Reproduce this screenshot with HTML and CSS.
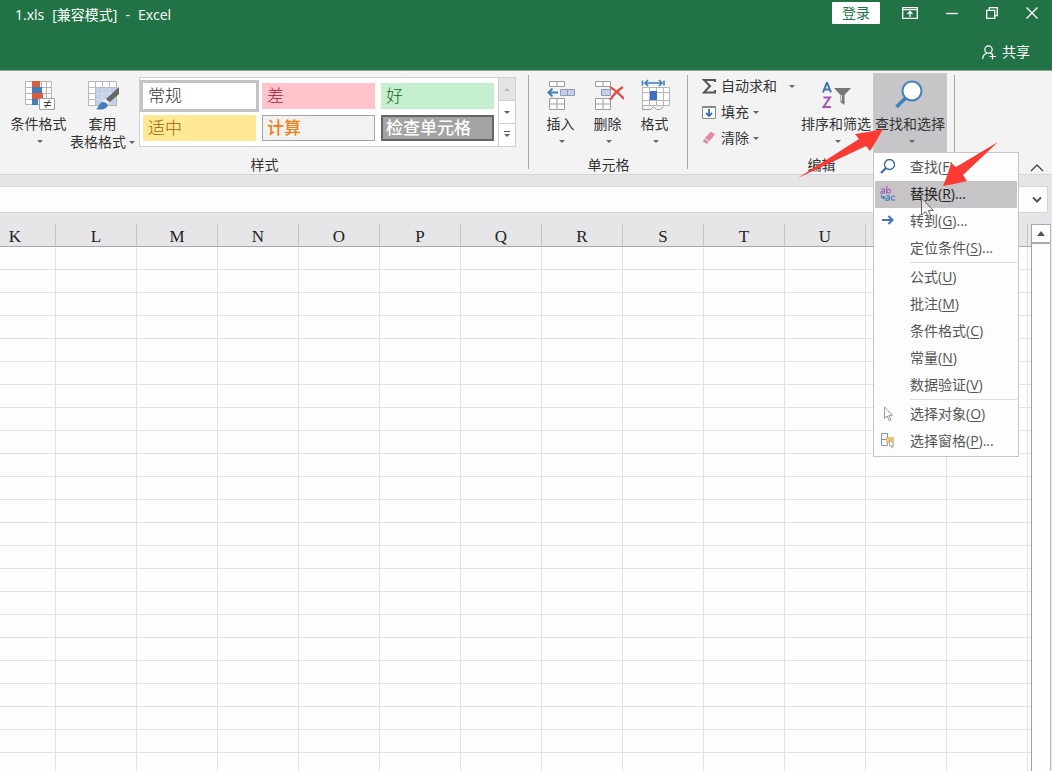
FILE: index.html
```html
<!DOCTYPE html>
<html lang="zh-CN">
<head>
<meta charset="utf-8">
<title>1.xls [兼容模式] - Excel</title>
<link rel="stylesheet" href="styles.css">
</head>
<body>
<header class="titlebar">
  <div class="title-row">
    <h1 class="doc-title"><span>1.xls</span><span>[兼容模式]</span><span>-</span><span>Excel</span></h1>
    <button class="login">登录</button>
    <div class="window-buttons">
      <button aria-label="功能区显示选项"><svg width="16" height="12" viewBox="0 0 16 12" fill="none" stroke="#fff" stroke-width="1.300"><path d="M.7.7h14.600v10.600H.7zM.7 2.700h14.600M8 10V5M5.500 7 8 4.500 10.500 7"/></svg></button>
      <button aria-label="最小化"><svg width="12" height="12" viewBox="0 0 12 12" fill="none" stroke="#fff" stroke-width="1.300"><path d="M0 6.500h12"/></svg></button>
      <button aria-label="还原"><svg width="12" height="12" viewBox="0 0 12 12" fill="none" stroke="#fff" stroke-width="1.300"><path d="M.7 3.300h8v8h-8zM3.300 3V.7h8v8H9"/></svg></button>
      <button aria-label="关闭"><svg width="12" height="12" viewBox="0 0 12 12" fill="none" stroke="#fff" stroke-width="1.400"><path d="M.5.5l11 11M11.500.5l-11 11"/></svg></button>
    </div>
  </div>
  <button class="share"><svg width="15" height="15" viewBox="0 0 15 15" fill="none" stroke="#fff" stroke-width="1.200"><circle cx="6.500" cy="4.500" r="3.700"/><path d="M.6 14c.3-3 2-5.200 4.300-5.900M8.200 8l2 1.300M10.500 8.500v6M7.500 11.500h6.500"/></svg>共享</button>
</header>

<main class="workspace">
<section class="ribbon" aria-label="开始">
  <div class="group group-styles">
    <div class="tools">
      <button class="big conditional">
        <svg width="32" height="32" viewBox="0 0 32 32"><path fill="#fff" stroke="#b5b5b5" d="M2.500 2.500h26v23h-26zM9.500 2.500v23M18.500 2.500v23M23.500 2.500v23M2.500 8.500h26M2.500 14.500h26M2.500 20.500h26"/><path fill="#dd5a3a" d="M9 2h8v6H9zM9 14h11v6H9z"/><path fill="#3f7fbe" d="M9 8h10v6H9zM9 20h6v6H9z"/><path fill="#fff" stroke="#a0a0a0" d="M16.500 19.500h15v11h-15z"/><path fill="none" stroke="#444" d="M21 23.500h7M21 26.500h7M26.500 21l-4 8"/></svg>
        <span>条件格式</span><i class="caret"></i>
      </button>
      <button class="big table-format">
        <svg width="32" height="32" viewBox="0 0 32 32"><path fill="#fff" stroke="#b5b5b5" d="M1.500 2.500h28v24h-28z"/><path fill="#c3cfe8" d="M9 8h20v18H9z"/><path fill="none" stroke="#b5bac5" d="M8.500 2.500v24M15.500 2.500v6M22.500 2.500v6M1.500 8.500h28M1.500 14.500h7M1.500 20.500h7"/><path fill="none" stroke="#d4dcee" d="M15.500 9v17M22.500 9v17M9 14.500h20M9 20.500h20"/><path fill="#666" d="M32 8v7l-9 8-4-3z"/><path fill="#f3f3f3" d="M18 20l4 4-2 2-4-4z"/><path fill="#3f7fbe" d="M9 30c3-1 2-6 7-7 3 0 6 3 4 5-3 3-7 3-11 2z"/></svg>
        <span>套用</span><span class="with-caret">表格格式<i class="caret"></i></span>
      </button>
      <div class="gallery">
        <div class="swatches">
          <button class="swatch normal">常规</button>
          <button class="swatch bad">差</button>
          <button class="swatch good">好</button>
          <button class="swatch neutral">适中</button>
          <button class="swatch calc">计算</button>
          <button class="swatch check">检查单元格</button>
        </div>
        <div class="spinner">
          <button class="off" aria-label="上一行"><i class="caret up"></i></button>
          <button aria-label="下一行"><i class="caret"></i></button>
          <button aria-label="其他"><i class="caret more"></i></button>
        </div>
      </div>
    </div>
    <h2>样式</h2>
  </div>

  <div class="group group-cells">
    <div class="tools">
      <button class="big">
        <svg width="32" height="32" viewBox="0 0 32 32"><path fill="#fff" stroke="#9b9b9b" d="M4.500 2.500h15v5h-15zM12 2.500v5M4.500 19.500h15v11h-15zM12 19.500v11M4.500 25h15"/><path fill="#c3d0e6" stroke="#8c9cb5" d="M15.500 10.500h14v6h-14zM22.500 10.500v6"/><path fill="none" stroke="#3f7fbe" stroke-width="2" d="M13 13.500H4M7.500 9.500l-4 4 4 4"/></svg>
        <span>插入</span><i class="caret"></i>
      </button>
      <button class="big">
        <svg width="32" height="32" viewBox="0 0 32 32"><path fill="#fff" stroke="#9b9b9b" d="M3.500 2.500h15v5h-15zM11 2.500v5M3.500 19.500h15v11h-15zM11 19.500v11M3.500 25h15"/><path fill="#c3d0e6" stroke="#8c9cb5" d="M9.500 10.500h9v6h-9z"/><path fill="none" stroke="#dd4b3e" stroke-width="2.200" d="M18 8c5 3 10 7 14 12M31 8c-5 3-9 7-13 13"/></svg>
        <span>删除</span><i class="caret"></i>
      </button>
      <button class="big">
        <svg width="32" height="32" viewBox="0 0 32 32"><path fill="#fff" stroke="#b5b5b5" d="M3.500 8.500h27v18h-27zM10.500 8.500v18M17.500 8.500v18M24.500 8.500v18M3.500 13.500h27M3.500 21.500h27"/><path fill="none" stroke="#a0a0a0" d="M3.500 26.500v4h8l3-3 3 3h4l3-3"/><path fill="none" stroke="#3f7fbe" stroke-width="1.600" d="M6 4h17M9 1 6 4l3 3M20 1l3 3-3 3M3.500 1.500v5M25 1.500v5"/><path fill="#3f6fc0" d="M11 12h7v9h-7z"/></svg>
        <span>格式</span><i class="caret"></i>
      </button>
    </div>
    <h2>单元格</h2>
  </div>

  <div class="group group-edit">
    <div class="tools">
      <div class="stack">
        <button class="small"><svg width="16" height="16" viewBox="0 0 16 16" fill="none" stroke="#555" stroke-width="2"><path d="M14 4V2H3L9 8l-6 6.500h11V12"/></svg><span>自动求和</span><i class="caret far"></i></button>
        <button class="small"><svg width="16" height="16" viewBox="0 0 16 16"><path fill="#fff" stroke="#8a8a8a" d="M1.500 2.500h13v12h-13z"/><path fill="#8a8a8a" d="M1 2h14v2H1z"/><path fill="none" stroke="#3472b5" stroke-width="1.800" d="M8 5v7M5 9l3 3 3-3"/></svg><span>填充</span><i class="caret"></i></button>
        <button class="small"><svg width="16" height="16" viewBox="0 0 16 16"><path fill="#e8879c" d="M10 1.500 14 4.500 8.500 11 4 8z"/><path fill="#e8879c" d="M3.300 8.800 7.700 11.800 6 14 2 11.500z"/></svg><span>清除</span><i class="caret"></i></button>
      </div>
      <button class="big sort">
        <svg width="32" height="32" viewBox="0 0 32 32"><g fill="none" stroke-width="2"><path stroke="#4472b8" d="M3 13.500 6.800 4h.4l3.800 9.500M4.500 10.500h5"/><path stroke="#a855b8" d="M3.500 18.500h6.500L3.500 28H11"/></g><path fill="#777" d="M14 9h17l-6.500 7v10l-4-3v-7z"/><path stroke="#ddd" d="M21.500 16v6"/></svg>
        <span>排序和筛选</span><i class="caret"></i>
      </button>
      <div class="dropdown">
        <button class="big find" aria-expanded="true">
          <svg width="32" height="32" viewBox="0 0 32 32"><path stroke="#3f7fbe" stroke-width="3.500" d="M11.500 19 2.500 28"/><circle cx="18" cy="12" r="9.500" fill="#fff" stroke="#3f7fbe" stroke-width="2"/></svg>
          <span>查找和选择</span><i class="caret"></i>
        </button>
        <div class="menu" role="menu">
          <button role="menuitem"><svg width="16" height="16" viewBox="0 0 16 16"><path stroke="#35679a" stroke-width="2" d="M6 9 1 14"/><circle cx="9.500" cy="5.500" r="5" fill="#fff" stroke="#35679a" stroke-width="1.300"/></svg><span>查找(<u>F</u>)...</span></button>
          <button role="menuitem" class="active"><svg class="letters" width="16" height="16" viewBox="0 0 16 16" fill="none" stroke-width="1.100"><g stroke="#a060b0"><path d="M1 3.300c2-1 3.500-.5 3.500 1V7.500M4.500 5C2 5 .8 5.600.8 6.500c0 1.300 2.700 1.200 3.700-.3"/><path d="M6.700 0v7.500"/><circle cx="8.600" cy="5.300" r="1.900"/></g><g stroke="#3f7fbe"><path d="M6 10.300c2-1 3.500-.5 3.500 1v3.200M9.500 12c-2.500 0-3.700.6-3.700 1.500 0 1.300 2.700 1.200 3.700-.3M15 10.500c-1.800-1.200-3.600-.1-3.600 1.600s1.900 2.900 3.600 1.700"/><path d="M1.500 9v2.500h3M3.200 9.800l1.600 1.700-1.600 1.700"/></g></svg><span>替换(<u>R</u>)...</span></button>
          <button role="menuitem"><svg width="16" height="16" viewBox="0 0 16 16" fill="none" stroke="#3f74b8" stroke-width="2"><path d="M2 7h10M8.500 3l4 4-4 4"/></svg><span>转到(<u>G</u>)...</span></button>
          <button role="menuitem"><i class="blank"></i><span>定位条件(<u>S</u>)...</span></button>
          <hr>
          <button role="menuitem"><i class="blank"></i><span>公式(<u>U</u>)</span></button>
          <button role="menuitem"><i class="blank"></i><span>批注(<u>M</u>)</span></button>
          <button role="menuitem"><i class="blank"></i><span>条件格式(<u>C</u>)</span></button>
          <button role="menuitem"><i class="blank"></i><span>常量(<u>N</u>)</span></button>
          <button role="menuitem"><i class="blank"></i><span>数据验证(<u>V</u>)</span></button>
          <hr>
          <button role="menuitem"><svg width="16" height="16" viewBox="0 0 16 16"><path fill="#fff" stroke="#999" d="M4.500.8v11.500l2.700-2.300 2 4.700 1.700-.8-2-4.400 3.500-.2z"/></svg><span>选择对象(<u>O</u>)</span></button>
          <button role="menuitem"><svg width="16" height="16" viewBox="0 0 16 16"><path fill="#fff" stroke="#8b93a0" d="M1.500.5h6v6h-6zM1.500 6.500h6v6h-6z"/><path fill="#efc277" d="M6 4h8v6H6z"/><path fill="#fff" stroke="#999" stroke-width=".8" d="M9.500 7v6.500l1.600-1.300 1.200 2.800 1-.5-1.200-2.600 2.200-.2z"/></svg><span>选择窗格(<u>P</u>)...</span></button>
        </div>
      </div>
    </div>
    <h2>编辑</h2>
  </div>
  <button class="collapse" aria-label="折叠功能区"><svg width="14" height="8" viewBox="0 0 14 8" fill="none" stroke="#444" stroke-width="1.300"><path d="M1 7l6-6 6 6"/></svg></button>
</section>

<div class="formula-bar">
  <input type="text" aria-label="编辑栏">
  <button aria-label="展开编辑栏"><svg width="12" height="8" viewBox="0 0 12 8" fill="none" stroke="#555" stroke-width="2"><path d="M2 1.500l4 4 4-4"/></svg></button>
</div>

<div class="sheet">
  <div class="grid">
    <table>
      <thead><tr><th>K</th><th>L</th><th>M</th><th>N</th><th>O</th><th>P</th><th>Q</th><th>R</th><th>S</th><th>T</th><th>U</th><th></th><th></th><th></th></tr></thead>
      <tbody></tbody>
    </table>
  </div>
  <div class="scrollbar">
    <button aria-label="向上滚动"><i class="caret up dark"></i></button>
    <div class="track"></div>
  </div>
</div>

<svg class="annotations" width="220" height="160" viewBox="790 70 220 160" aria-hidden="true">
  <path fill="#fb3a34" d="M798 178 859 139 855 134Q869 132 883 129 877 140 870 151L866 146Z"/>
  <path fill="#fb3a34" d="M998 142 956 167 951 163Q948 175 943 186 955 184 967 181L963 175Z"/>
  <path fill="#fff" fill-opacity=".45" stroke="#666" stroke-width="1" d="M921.500 198v17l4-3.500 3 6 2.500-1.200-2.700-5.800h5z"/>
</svg>
</main>
<script src="grid.js"></script>
</body>
</html>
```
FILE: grid.js
```js
const head = document.querySelector('.grid thead tr');
const body = document.querySelector('.grid tbody');
for (let r = 0; r < 60; r++) {
  const row = body.insertRow();
  for (let c = 0; c < head.cells.length; c++) row.insertCell();
}
```
FILE: styles.css
```css
* { box-sizing: border-box; }

body {
  margin: 0;
  height: 100vh;
  display: flex;
  flex-direction: column;
  overflow: hidden;
  background: #e6e6e8;
  color: #333;
  font: 14px/18px "Open Sans", "Noto Sans CJK SC", sans-serif;
}

button {
  margin: 0;
  padding: 0;
  border: 0;
  background: none;
  color: inherit;
  font: inherit;
}

svg { display: block; flex: none; }

/* Title bar */
.titlebar {
  flex: none;
  height: 71px;
  display: flex;
  flex-direction: column;
  align-items: flex-end;
  background: #217346;
  border-bottom: 1px solid #86a893;
  color: #fff;
}
.title-row {
  width: 100%;
  height: 30px;
  display: flex;
  align-items: flex-start;
  padding: 2px 14px 0 15px;
}
.doc-title {
  flex: 1;
  display: flex;
  gap: 8px;
  margin: 0;
  font-size: 14px;
  font-weight: 400;
  line-height: 25px;
}
.login {
  width: 48px;
  height: 22px;
  border-radius: 1px;
  background: #fff;
  color: #217346;
}
.window-buttons {
  display: flex;
  align-items: center;
  gap: 28px;
  height: 22px;
  margin-left: 22px;
}
.share {
  display: flex;
  align-items: center;
  gap: 5px;
  margin: 13px 22px 0 0;
}

/* Ribbon */
.workspace {
  flex: 1;
  min-height: 0;
  position: relative;
  display: flex;
  flex-direction: column;
}
.ribbon {
  flex: none;
  height: 104px;
  display: flex;
  padding-top: 2px;
  background: #f3f3f3;
  border-bottom: 1px solid #d4d4d4;
}
.group {
  position: relative;
  display: flex;
  flex-direction: column;
  justify-content: space-between;
  flex: none;
}
.group::after {
  content: "";
  position: absolute;
  top: 2px;
  right: 0;
  bottom: 5px;
  border-right: 1px solid #a8a8a8;
}
.group h2 {
  margin: 0;
  font-size: 14px;
  font-weight: 400;
  text-align: center;
}
.tools { display: flex; align-items: flex-start; padding-left: 8px; }
.group-styles { width: 529px; }
.group-cells { width: 159px; }
.group-edit { width: 267px; }
.group-edit .tools { padding-left: 13px; }

.big {
  display: flex;
  flex-direction: column;
  align-items: center;
  flex: none;
  width: 47px;
  height: 79px;
  padding-top: 6px;
}
.big svg { margin-bottom: 4px; }
.big > .caret { margin: 7px 0 0 3px; }
.conditional { width: 61px; }
.table-format { width: 67px; }
.with-caret {
  display: flex;
  align-items: center;
  gap: 3px;
  white-space: nowrap;
}

.caret {
  flex: none;
  border: 3px solid transparent;
  border-top-color: #666;
  border-bottom: 0;
}
.caret.up { border-top: 0; border-bottom: 3px solid #bbb; }
.caret.dark { border-width: 0 4px 5px; border-bottom-color: #555; }
.caret.more { position: relative; }
.caret.more::before {
  content: "";
  position: absolute;
  left: -3px;
  top: -6px;
  width: 6px;
  border-top: 1px solid #555;
}

/* Cell style gallery */
.gallery {
  display: flex;
  height: 70px;
  margin: 4px 0 0 3px;
  background: #fff;
  border: 1px solid #d0d0d0;
}
.swatches {
  display: grid;
  grid-template-columns: repeat(3, 113px);
  grid-template-rows: repeat(2, 26px);
  gap: 6px;
  padding: 5px 4px 5px 3px;
}
.swatch {
  padding-left: 5px;
  text-align: left;
  font-size: 17px;
  line-height: 24px;
}
.normal { outline: 3px solid #c3c3c3; font-weight: 300; }
.bad { background: #ffc3cc; color: #a01c2c; font-weight: 300; }
.good { background: #c6efce; color: #146b1e; font-weight: 300; }
.neutral { background: #ffe995; color: #9c6500; font-weight: 300; }
.calc { background: #f2f2f2; border: 1px solid #a5a5a5; color: #f07d10; font-weight: 500; padding-left: 4px; }
.check { background: #a3a3a3; border: 2px solid #666; color: #fff; font-weight: 500; padding-left: 3px; line-height: 22px; }
.spinner {
  width: 17px;
  display: flex;
  flex-direction: column;
  border-left: 1px solid #d0d0d0;
}
.spinner button {
  flex: 1;
  display: flex;
  align-items: center;
  justify-content: center;
}
.spinner button + button { border-top: 1px solid #d0d0d0; }
.spinner .off { background: #e4e4e6; }

/* Editing group */
.stack {
  display: flex;
  flex-direction: column;
  width: 98px;
}
.small {
  display: flex;
  align-items: center;
  gap: 4px;
  height: 26px;
}
.small .far { margin-left: 8px; }
.sort { width: 74px; white-space: nowrap; }
.dropdown { position: relative; }
.find { width: 74px; background: #c6c5c7; white-space: nowrap; }

.menu {
  position: absolute;
  z-index: 2;
  top: 100%;
  left: 0;
  width: 146px;
  padding: 1px;
  background: #fdfdfd;
  border: 1px solid #c6c6c6;
  color: #555;
}
.menu button {
  width: 100%;
  height: 27px;
  display: flex;
  align-items: center;
  gap: 14px;
  padding: 0 0 1px 5px;
  white-space: nowrap;
}
.menu .active { background: #c6c4c6; color: #222; }
.blank { width: 16px; }
.menu hr {
  height: 2px;
  margin: 0 0 0 35px;
  border: 0;
  border-top: 1px solid #dcdcdc;
}
.menu u { text-underline-offset: 2px; }

.collapse { margin: auto 8px 2px auto; }

/* Formula bar */
.formula-bar {
  flex: none;
  display: flex;
  height: 27px;
  margin: 11px 4px 0 0;
  background: #fdfdfe;
  border: 1px solid #d6d6d8;
  border-left: 0;
}
.formula-bar input {
  flex: 1;
  min-width: 0;
  border: 0;
  background: none;
}
.formula-bar button {
  width: 20px;
  display: flex;
  align-items: center;
  justify-content: center;
}

/* Worksheet */
.sheet {
  flex: 1;
  min-height: 0;
  display: flex;
  padding: 11px 1px 0 0;
}
.grid {
  flex: 1;
  min-width: 0;
  overflow: hidden;
}
.grid table {
  width: 1134px;
  margin-left: -25px;
  table-layout: fixed;
  border-collapse: separate;
  border-spacing: 0;
}
.grid th {
  height: 23px;
  padding: 4px 0 0;
  border-right: 1px solid #c4c4c6;
  border-bottom: 1px solid #a8a8a8;
  color: #222;
  font: 400 17px/18px "Liberation Serif", serif;
}
.grid td {
  height: 23px;
  padding: 0;
  background: #fdfdfe;
  border-right: 1px solid #e2e2e4;
  border-bottom: 1px solid #e2e2e4;
}
.scrollbar {
  width: 20px;
  display: flex;
  flex-direction: column;
  border-left: 1px solid #a0a0a0;
  border-right: 1px solid #bbb;
  background: #fdfdfe;
}
.scrollbar button {
  height: 20px;
  display: flex;
  align-items: center;
  justify-content: center;
  border: 1px solid #aaa;
  border-width: 1px 0 2px;
}
.track { flex: 1; }

/* Pointer and callout arrows */
.annotations {
  position: absolute;
  z-index: 3;
  left: 790px;
  top: -1px;
  pointer-events: none;
}
```
